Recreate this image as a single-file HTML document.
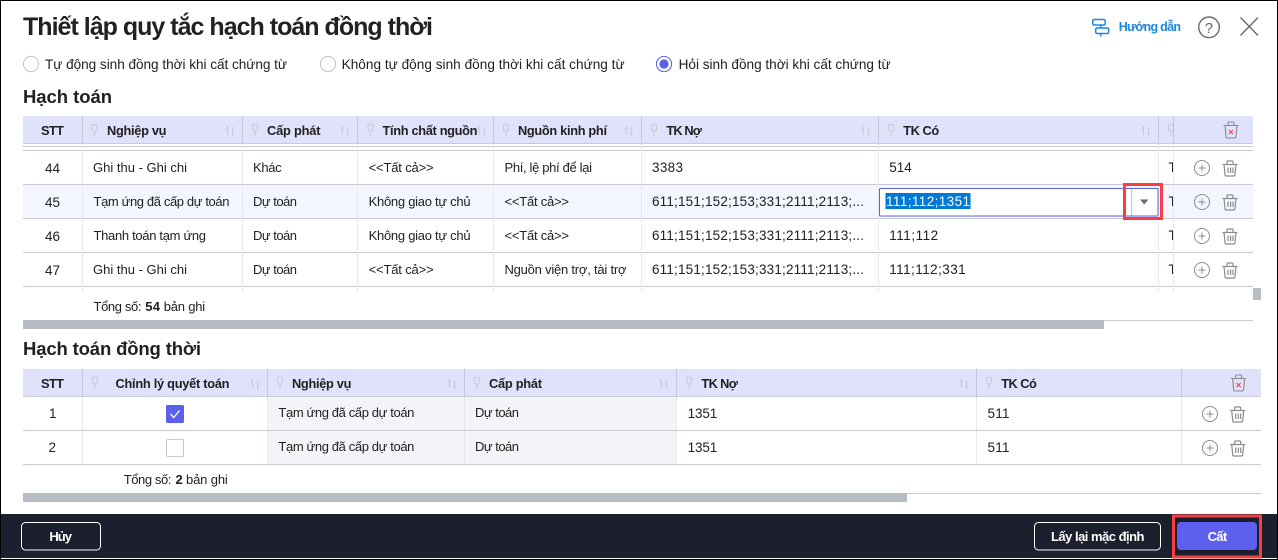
<!DOCTYPE html>
<html lang="vi">
<head>
<meta charset="utf-8">
<title>Thiết lập quy tắc hạch toán đồng thời</title>
<style>
html,body{margin:0;padding:0;background:#fff;overflow:hidden}
svg{display:block}
text{font-family:"Liberation Sans","Noto Sans CJK SC",sans-serif;fill:#212121;font-size:13px;white-space:pre}
.b{font-weight:bold}
.h{font-weight:bold;font-size:12.8px}
.n{font-size:13.5px}
.r{font-size:13.6px}
.s{font-weight:bold;font-size:18.5px}
.f{font-weight:bold;font-size:13px;fill:#fff}
.d{stroke:#d9d9df;stroke-width:1;stroke-dasharray:1 1;fill:none}
.hs{stroke:#c3c5d6;stroke-width:1;fill:none}
.rl{stroke:#c9cad4;stroke-width:1;fill:none}
</style>
</head>
<body>
<svg width="1278" height="560" viewBox="0 0 1278 560" xmlns="http://www.w3.org/2000/svg">
<defs>
<clipPath id="tc"><rect x="1160" y="116" width="13" height="180"/></clipPath>
<g id="pin" fill="none" stroke="#cdced8" stroke-width="1.2">
<path d="M-2.5 -5.5H2.5V-0.5L1.5 1H-1.5L-2.5 -0.5ZM0 1V6"/>
</g>
<g id="sort" fill="none" stroke="#c9cad4" stroke-width="1">
<path d="M-2.5 4V-4L-4.2 -2M2.5 -4V4L4.2 2"/>
</g>
<g id="plus" fill="none" stroke="#8c8c8c" stroke-width="1">
<circle cx="0" cy="0" r="7.5"/>
<path d="M-3.5 0H3.5M0 -3.5V3.5"/>
</g>
<g id="trash" fill="none" stroke="#8c8c8c" stroke-width="1.2">
<path d="M-7.5 -4H7.5M-3 -4V-6.5Q-3 -7.5 -2 -7.5H2Q3 -7.5 3 -6.5V-4M-6 -4L-5 6Q-5 7.5 -3.5 7.5H3.5Q5 7.5 5 6L6 -4M-2 -1V4.5M0.6 -1V4.5M3 -1V4.5"/>
</g>
<g id="trashx" fill="none" stroke="#8c8c8c" stroke-width="1.1">
<path d="M-7.5 -4.5H7.5M-3 -4.5V-7Q-3 -8 -2 -8H2Q3 -8 3 -7V-4.5M-6 -4.5L-5 6.5Q-5 8 -3.5 8H3.5Q5 8 5 6.5L6 -4.5"/>
<path d="M-2 0L2 4M2 0L-2 4" stroke="#f0405a"/>
</g>
</defs>

<rect width="1278" height="560" fill="#fff"/>

<!-- header -->
<text x="23" y="35" class="b" style="font-size:25px" textLength="410">Thiết lập quy tắc hạch toán đồng thời</text>
<g fill="none" stroke="#1a86e0" stroke-width="1.5">
<path d="M1100.7 25V28M1100.7 33.5V36.5"/>
<rect x="1092.7" y="19.5" width="12.5" height="5.5" rx="1.5"/>
<rect x="1095.7" y="28" width="13" height="5.5" rx="1.5"/>
</g>
<text x="1118.7" y="31" class="b" style="font-size:12.5px;fill:#1a86e0" textLength="62.3">Hướng dẫn</text>
<circle cx="1209" cy="27.3" r="10.3" fill="none" stroke="#6a6a6a" stroke-width="1.4"/>
<text x="1204.8" y="33" style="font-size:15px;fill:#6a6a6a">?</text>
<path d="M1240.5 17.5L1258 35.5M1258 17.5L1240.5 35.5" stroke="#6a6a6a" stroke-width="1.4" fill="none"/>

<!-- radios -->
<circle cx="31" cy="64" r="7.6" fill="#fff" stroke="#c4c4c4"/>
<text x="45" y="69" class="r" textLength="242">Tự động sinh đồng thời khi cất chứng từ</text>
<circle cx="328" cy="64" r="7.6" fill="#fff" stroke="#c4c4c4"/>
<text x="341.6" y="69" class="r" textLength="283">Không tự động sinh đồng thời khi cất chứng từ</text>
<circle cx="664" cy="64" r="7.6" fill="#fff" stroke="#5d5fef"/>
<circle cx="664" cy="64" r="4.6" fill="#5d5fef"/>
<text x="678.6" y="69" class="r" textLength="212">Hỏi sinh đồng thời khi cất chứng từ</text>

<text x="23" y="103" class="s" textLength="89">Hạch toán</text>

<!-- table 1 -->
<rect x="23" y="116" width="1230" height="27" fill="#e0e1fb"/>
<rect x="23" y="185" width="1230" height="33" fill="#f3f6fe"/>
<g class="rl">
<path d="M23 143.5H1253M23 146.5H1253M23 150.5H1253M23 184.5H1253M23 218.5H1253M23 252.5H1253M23 286.5H1253"/>
</g>
<g class="hs">
<path d="M82.5 116V143M242.5 116V143M357.5 116V143M493.5 116V143M641.5 116V143M878.5 116V143M1158.5 116V143M1173.5 116V143"/>
</g>
<g class="d">
<path d="M82.5 144V292M242.5 144V292M357.5 144V292M493.5 144V292M641.5 144V292M878.5 144V292M1158.5 144V292M1173.5 144V292"/>
</g>

<text x="41" y="135" class="h" textLength="23">STT</text>
<use href="#pin" x="94.5" y="130"/><text x="107" y="135" class="h" textLength="59.5">Nghiệp vụ</text><use href="#sort" x="230" y="131"/>
<use href="#pin" x="255" y="130"/><text x="267" y="135" class="h" textLength="53.5">Cấp phát</text><use href="#sort" x="345" y="131"/>
<use href="#pin" x="370.6" y="130"/><text x="382.5" y="135" class="h" textLength="95">Tính chất nguồn</text><use href="#sort" x="481.6" y="131"/>
<use href="#pin" x="506" y="130"/><text x="518" y="135" class="h" textLength="89">Nguồn kinh phí</text><use href="#sort" x="628.6" y="131"/>
<use href="#pin" x="654" y="130"/><text x="666.4" y="135" class="h" textLength="35.5">TK Nợ</text><use href="#sort" x="865.8" y="131"/>
<use href="#pin" x="891.2" y="130"/><text x="903.2" y="135" class="h" textLength="36">TK Có</text><use href="#sort" x="1146" y="131"/>
<g clip-path="url(#tc)"><use href="#pin" x="1171" y="130"/></g>
<use href="#trashx" x="1231" y="130"/>

<!-- rows -->
<text x="45" y="173" class="n" textLength="15">44</text>
<text x="93" y="172" textLength="94">Ghi thu - Ghi chi</text>
<text x="253" y="172" textLength="28.6">Khác</text>
<text x="368.6" y="172" textLength="65">&lt;&lt;Tất cả&gt;&gt;</text>
<text x="504.5" y="172" textLength="87.5">Phí, lệ phí để lại</text>
<text x="652" y="172" class="n" textLength="31">3383</text>
<text x="889.2" y="172" class="n" textLength="22.6">514</text>

<text x="45" y="207" class="n" textLength="15">45</text>
<text x="93.5" y="206" textLength="136">Tạm ứng đã cấp dự toán</text>
<text x="253" y="206" textLength="44">Dự toán</text>
<text x="368.6" y="206" textLength="102">Không giao tự chủ</text>
<text x="504.5" y="206" textLength="64.5">&lt;&lt;Tất cả&gt;&gt;</text>
<text x="652" y="206" class="n" textLength="212">611;151;152;153;331;2111;2113;...</text>

<text x="45" y="241" class="n" textLength="15">46</text>
<text x="93.5" y="240" textLength="112.5">Thanh toán tạm ứng</text>
<text x="253" y="240" textLength="44">Dự toán</text>
<text x="368.6" y="240" textLength="102">Không giao tự chủ</text>
<text x="504.5" y="240" textLength="64.5">&lt;&lt;Tất cả&gt;&gt;</text>
<text x="652" y="240" class="n" textLength="212">611;151;152;153;331;2111;2113;...</text>
<text x="889.2" y="240" class="n" textLength="49">111;112</text>

<text x="45" y="275" class="n" textLength="15">47</text>
<text x="93" y="274" textLength="94">Ghi thu - Ghi chi</text>
<text x="253" y="274" textLength="44">Dự toán</text>
<text x="368.6" y="274" textLength="65">&lt;&lt;Tất cả&gt;&gt;</text>
<text x="504.5" y="274" textLength="122">Nguồn viện trợ, tài trợ</text>
<text x="652" y="274" class="n" textLength="212">611;151;152;153;331;2111;2113;...</text>
<text x="889.2" y="274" class="n" textLength="76.5">111;112;331</text>

<g clip-path="url(#tc)">
<text x="1168.5" y="172" class="n">T</text>
<text x="1168.5" y="206" class="n">T</text>
<text x="1168.5" y="240" class="n">T</text>
<text x="1168.5" y="274" class="n">T</text>
</g>

<!-- editor -->
<rect x="879.5" y="188.5" width="278.5" height="27.5" rx="1" fill="#fff" stroke="#5d5fef"/>
<rect x="885.5" y="193" width="85" height="16" fill="#0078d7"/>
<text x="886" y="206" class="n" style="fill:#fff" textLength="84">111;112;1351</text>
<path d="M1131.5 189V215.5" stroke="#c4c4c4"/>
<path d="M1140 199.5H1148.5L1144.2 204.5Z" fill="#6e6e6e"/>
<rect x="1124.5" y="184.5" width="37" height="34" fill="none" stroke="#f44040" stroke-width="3"/>

<use href="#plus" x="1202" y="168"/><use href="#trash" x="1230" y="168.5"/>
<use href="#plus" x="1202" y="202"/><use href="#trash" x="1230" y="202.5"/>
<use href="#plus" x="1202" y="236"/><use href="#trash" x="1230" y="236.5"/>
<use href="#plus" x="1202" y="270"/><use href="#trash" x="1230" y="270.5"/>

<rect x="1253" y="288" width="8" height="12" fill="#b8bcc4"/>

<text x="93.5" y="311" textLength="48">Tổng số:</text>
<text x="145.3" y="311" class="b" textLength="14.7">54</text>
<text x="163.7" y="311" textLength="41.5">bản ghi</text>

<path d="M1104 320.5H1253" stroke="#c9cad4"/>
<rect x="23" y="320" width="1081" height="9" fill="#b8bcc4"/>

<text x="23" y="355" class="s" textLength="178">Hạch toán đồng thời</text>

<!-- table 2 -->
<rect x="23" y="369" width="1238" height="27" fill="#e0e1fb"/>
<rect x="268" y="397" width="408" height="67" fill="#f3f4f8"/>
<g class="rl">
<path d="M23 396.5H1261M23 430.5H1261M23 464.5H1261"/>
</g>
<g class="hs">
<path d="M82.5 369V396M267.5 369V396M464.5 369V396M676.5 369V396M976.5 369V396M1181.5 369V396"/>
</g>
<g class="d">
<path d="M82.5 397V464M267.5 397V464M464.5 397V464M676.5 397V464M976.5 397V464M1181.5 397V464"/>
</g>

<text x="41" y="388" class="h" textLength="23">STT</text>
<use href="#pin" x="95" y="383"/><text x="115.5" y="388" class="h" textLength="114">Chỉnh lý quyết toán</text><use href="#sort" x="255" y="384"/>
<use href="#pin" x="280" y="383"/><text x="292" y="388" class="h" textLength="59.4">Nghiệp vụ</text><use href="#sort" x="452" y="384"/>
<use href="#pin" x="476.7" y="383"/><text x="489" y="388" class="h" textLength="53">Cấp phát</text><use href="#sort" x="663.7" y="384"/>
<use href="#pin" x="689.2" y="383"/><text x="701.4" y="388" class="h" textLength="36.4">TK Nợ</text><use href="#sort" x="964" y="384"/>
<use href="#pin" x="989" y="383"/><text x="1001.2" y="388" class="h" textLength="35.6">TK Có</text>
<use href="#trashx" x="1238.6" y="383"/>

<text x="49" y="418" class="n" textLength="7">1</text>
<rect x="166" y="405" width="18" height="18" rx="1.5" fill="#5d5fef"/>
<path d="M170.5 414L173.7 417.5L179.5 410.5" fill="none" stroke="#fff" stroke-width="1.3"/>
<text x="278.4" y="417" textLength="136">Tạm ứng đã cấp dự toán</text>
<text x="475" y="417" textLength="44">Dự toán</text>
<text x="687.6" y="418" class="n" textLength="29.7">1351</text>
<text x="987.5" y="418" class="n" textLength="22">511</text>

<text x="48.5" y="452" class="n" textLength="7.5">2</text>
<rect x="166.5" y="439.5" width="17" height="17" rx="1.5" fill="#fff" stroke="#c9c9c9"/>
<text x="278.4" y="451" textLength="136">Tạm ứng đã cấp dự toán</text>
<text x="475" y="451" textLength="44">Dự toán</text>
<text x="687.6" y="452" class="n" textLength="29.7">1351</text>
<text x="987.5" y="452" class="n" textLength="22">511</text>

<use href="#plus" x="1210" y="414"/><use href="#trash" x="1237.7" y="414.5"/>
<use href="#plus" x="1210" y="448"/><use href="#trash" x="1237.7" y="448.5"/>

<text x="123.7" y="484" textLength="47.7">Tổng số:</text>
<text x="175.5" y="484" class="b" textLength="7">2</text>
<text x="186" y="484" textLength="41.8">bản ghi</text>

<path d="M907 493.5H1261" stroke="#c9cad4"/>
<rect x="23" y="493" width="884" height="9" fill="#b8bcc4"/>

<!-- footer -->
<rect x="0" y="514" width="1278" height="44" fill="#1c1f2e"/>
<rect x="21.5" y="522.5" width="79" height="27.5" rx="4" fill="none" stroke="#fff"/>
<text x="49.4" y="541" class="f" textLength="22.6">Hủy</text>
<rect x="1034.5" y="522.5" width="126" height="27.5" rx="4" fill="none" stroke="#fff"/>
<text x="1051" y="541" class="f" textLength="93.5">Lấy lại mặc định</text>
<rect x="1177" y="522" width="80" height="28" rx="4" fill="#5d5fef"/>
<text x="1207.6" y="541" class="f" textLength="19.6">Cất</text>
<rect x="1173.5" y="516" width="87" height="41" fill="none" stroke="#f44040" stroke-width="3"/>

<!-- window border -->
<path d="M0 .5H1278M.5 0V560M1277.5 0V560M0 559.5H1278" stroke="#000" fill="none"/>
</svg>
</body>
</html>
